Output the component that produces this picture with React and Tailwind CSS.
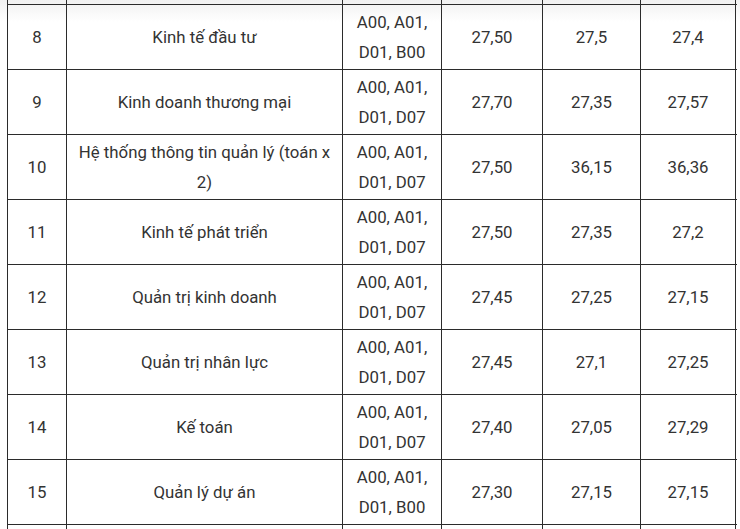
import React from "react";

const rows = [
  ["8", ["Kinh tế đầu tư"], ["A00, A01,", "D01, B00"], "27,50", "27,5", "27,4"],
  ["9", ["Kinh doanh thương mại"], ["A00, A01,", "D01, D07"], "27,70", "27,35", "27,57"],
  ["10", ["Hệ thống thông tin quản lý (toán x", "2)"], ["A00, A01,", "D01, D07"], "27,50", "36,15", "36,36"],
  ["11", ["Kinh tế phát triển"], ["A00, A01,", "D01, D07"], "27,50", "27,35", "27,2"],
  ["12", ["Quản trị kinh doanh"], ["A00, A01,", "D01, D07"], "27,45", "27,25", "27,15"],
  ["13", ["Quản trị nhân lực"], ["A00, A01,", "D01, D07"], "27,45", "27,1", "27,25"],
  ["14", ["Kế toán"], ["A00, A01,", "D01, D07"], "27,40", "27,05", "27,29"],
  ["15", ["Quản lý dự án"], ["A00, A01,", "D01, B00"], "27,30", "27,15", "27,15"],
];

const widths = ["w-[59px]", "w-[276px]", "w-[99px]", "w-[101px]", "w-[98px]", "w-[96px]"];

function Cell({ w, children, last }) {
  return (
    <div
      className={`${w} shrink-0 border-l border-[#2b2b2b] ${last ? "border-r" : ""} flex flex-col items-center justify-center text-center leading-[30px] whitespace-nowrap`}
    >
      {children}
    </div>
  );
}

function Strip({ h }) {
  return (
    <div className={`flex ${h}`}>
      {widths.map((w, i) => (
        <div key={i} className={`${w} shrink-0 border-l border-[#2b2b2b] ${i === 5 ? "border-r" : ""}`} />
      ))}
    </div>
  );
}

export default function App() {
  return (
    <div
      className="w-[740px] h-[529px] overflow-hidden bg-[linear-gradient(to_bottom,#f1f1f1_0px,#ffffff_22px)] pl-[7px] text-[16.8px] text-[#333333]"
      style={{ fontFamily: "Roboto, 'Liberation Sans', sans-serif" }}
    >
      <Strip h="h-[4px]" />
      <div className="border-t border-[#2b2b2b] w-[730px]">
        {rows.map((r, i) => (
          <div key={i} className="flex h-[65px] border-b border-[#2b2b2b]">
            <Cell w={widths[0]}>{r[0]}</Cell>
            <Cell w={widths[1]}>
              {r[1].map((t, j) => (
                <span key={j}>{t}</span>
              ))}
            </Cell>
            <Cell w={widths[2]}>
              {r[2].map((t, j) => (
                <span key={j}>{t}</span>
              ))}
            </Cell>
            <Cell w={widths[3]}>{r[3]}</Cell>
            <Cell w={widths[4]}>{r[4]}</Cell>
            <Cell w={widths[5]} last>
              {r[5]}
            </Cell>
          </div>
        ))}
      </div>
      <Strip h="h-[10px]" />
    </div>
  );
}
